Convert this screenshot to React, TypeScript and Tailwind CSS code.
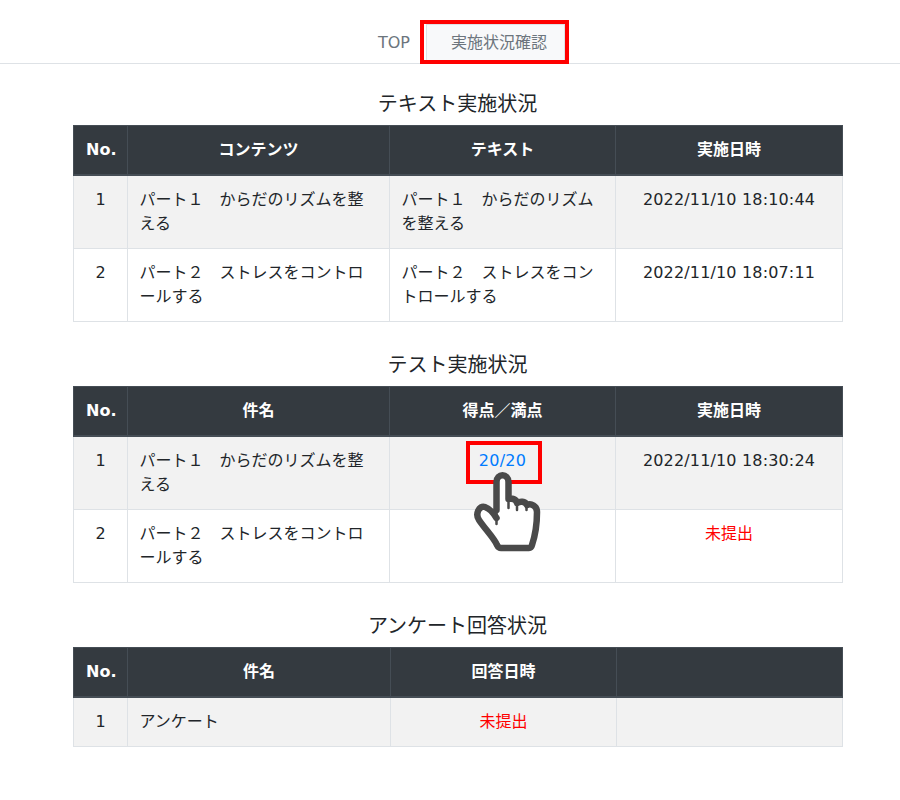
const font = { fontFamily: '"DejaVu Sans", "Noto Sans CJK JP", sans-serif' };

type Cell = { text: string; cls?: string };

function DataTable({
  title,
  head,
  rows,
  widths,
}: {
  title: string;
  head: string[];
  rows: (string | Cell)[][];
  widths: string[];
}) {
  return (
    <section className="ml-[73px] w-[769px] mb-[31px]">
      <h2 className="text-center text-[20px] leading-[24px] text-[#212529] mb-[9px] font-normal">{title}</h2>
      <table className="w-[769px] table-fixed border-collapse text-[16px] leading-[24px] text-[#212529]">
        <colgroup>
          {widths.map((w, i) => (
            <col key={i} style={{ width: w }} />
          ))}
        </colgroup>
        <thead>
          <tr className="bg-[#343a40] text-white">
            {head.map((h, i) => (
              <th key={i} className="border border-[#454d55] border-b-2 px-3 py-3 text-center font-bold">
                {h}
              </th>
            ))}
          </tr>
        </thead>
        <tbody>
          {rows.map((row, r) => (
            <tr key={r} className={r % 2 === 0 ? "bg-[#f2f2f2]" : "bg-white"}>
              {row.map((c, i) => {
                const cell = typeof c === "string" ? { text: c } : c;
                return (
                  <td key={i} className={`border border-[#dee2e6] px-[11.5px] py-3 align-top ${cell.cls ?? ""}`}>
                    {cell.text}
                  </td>
                );
              })}
            </tr>
          ))}
        </tbody>
      </table>
    </section>
  );
}

function Hand() {
  return (
    <svg
      className="absolute left-[470px] top-[468px] w-[76px] h-[90px]"
      viewBox="0 0 76 90"
      aria-hidden="true"
    >
      <path
        d="M26.5 42 L26.5 14 C26.5 5 38.5 5 38.5 14 L38.5 31 C42 30 46 31 47 35 C50 33 55 33 57 37 C61 35 67 38 67 44 C67 56 65 68 62 77 C61.5 79 61 80 59 80 L31 80 C29 80 28 79 27 77 C24 70 15 61 9 52 C5 46 9 37 15 39 C21 41 24 46 26.5 50"
        fill="#fff"
        stroke="#4a4a4a"
        strokeWidth="6.5"
        strokeLinejoin="round"
        strokeLinecap="round"
      />
      <path
        d="M26.5 42 L26.5 56 M38.5 31 L38.5 40 M47 35 L47 42 M56.5 37 L56.5 42"
        fill="none"
        stroke="#4a4a4a"
        strokeWidth="2.5"
        strokeLinecap="round"
      />
    </svg>
  );
}

export default function App() {
  const widths = ["54px", "262px", "226px", "227px"];
  const date = "text-center tracking-[0.16px]";
  return (
    <div className="relative w-[900px] h-[800px] bg-white overflow-hidden" style={font}>
      <nav className="flex justify-center border-b border-[#dee2e6] h-[64px] pt-[24px] mb-[28px] text-[16px] leading-[24px] text-[#6c757d]">
        <div className="ml-[26px] flex">
          <a className="pl-4 pr-[15px] pt-[6px] border border-transparent">TOP</a>
          <a className="w-[139px] pl-[24px] pt-[6px] border border-[#dee2e6] border-b-0 bg-[#f8f9fa]">実施状況確認</a>
        </div>
      </nav>

      <DataTable
        title="テキスト実施状況"
        widths={widths}
        head={["No.", "コンテンツ", "テキスト", "実施日時"]}
        rows={[
          [
            { text: "1", cls: "text-center" },
            "パート１　からだのリズムを整える",
            "パート１　からだのリズムを整える",
            { text: "2022/11/10 18:10:44", cls: date },
          ],
          [
            { text: "2", cls: "text-center" },
            "パート２　ストレスをコントロールする",
            "パート２　ストレスをコントロールする",
            { text: "2022/11/10 18:07:11", cls: date },
          ],
        ]}
      />

      <DataTable
        title="テスト実施状況"
        widths={widths}
        head={["No.", "件名", "得点／満点", "実施日時"]}
        rows={[
          [
            { text: "1", cls: "text-center" },
            "パート１　からだのリズムを整える",
            { text: "20/20", cls: "text-center tracking-[0.3px] text-[#007bff]" },
            { text: "2022/11/10 18:30:24", cls: date },
          ],
          [
            { text: "2", cls: "text-center" },
            "パート２　ストレスをコントロールする",
            "",
            { text: "未提出", cls: "text-center text-[#ff0000]" },
          ],
        ]}
      />

      <DataTable
        title="アンケート回答状況"
        widths={["54px", "263px", "226px", "226px"]}
        head={["No.", "件名", "回答日時", ""]}
        rows={[
          [
            { text: "1", cls: "text-center" },
            "アンケート",
            { text: "未提出", cls: "text-center text-[#ff0000]" },
            "",
          ],
        ]}
      />

      <div className="absolute left-[420px] top-[20px] w-[149px] h-[44px] border-4 border-[#ff0000]" />
      <div className="absolute left-[466px] top-[441px] w-[76px] h-[43px] border-4 border-[#ff0000]" />
      <Hand />
    </div>
  );
}
